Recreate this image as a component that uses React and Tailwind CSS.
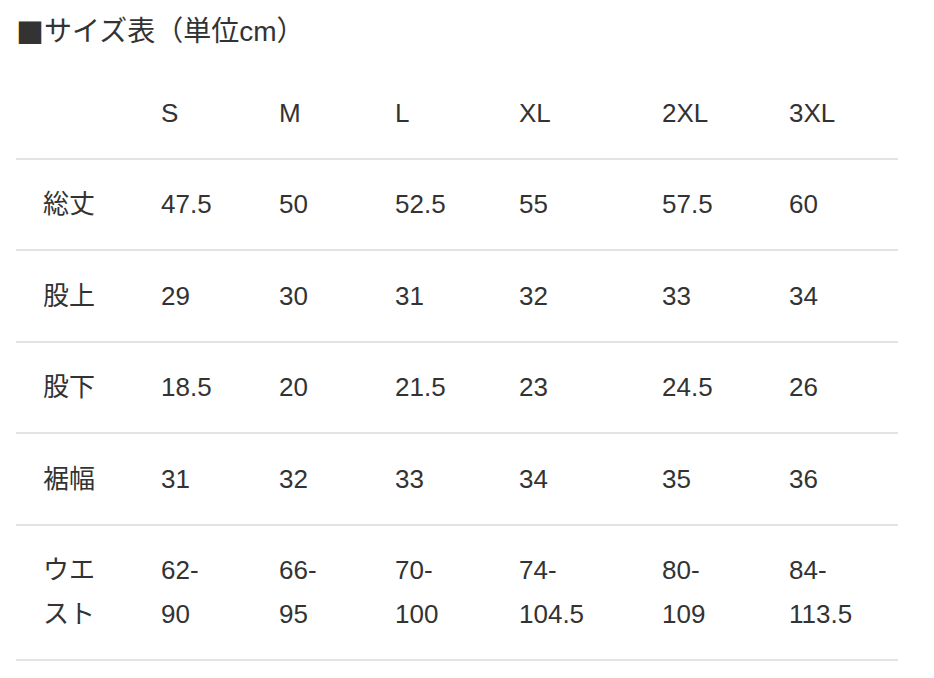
import React from "react";

const sizes = ["S", "M", "L", "XL", "2XL", "3XL"];

const rows = [
  { label: "総丈", values: ["47.5", "50", "52.5", "55", "57.5", "60"] },
  { label: "股上", values: ["29", "30", "31", "32", "33", "34"] },
  { label: "股下", values: ["18.5", "20", "21.5", "23", "24.5", "26"] },
  { label: "裾幅", values: ["31", "32", "33", "34", "35", "36"] },
  { label: "ウエスト", values: ["62-90", "66-95", "70-100", "74-104.5", "80-109", "84-113.5"] },
];

const widths = ["w-[118px]", "w-[118px]", "w-[116px]", "w-[124px]", "w-[143px]", "w-[127px]", "w-[136px]"];

function Cell({ children, className = "" }) {
  return <td className={"px-[27px] py-[22.75px] align-top " + className}>{children}</td>;
}

export default function App() {
  return (
    <div
      className="bg-white min-h-[678px] pl-4 pt-[10px] text-[#333] text-[26px] leading-[44px]"
      style={{ fontFamily: '"Liberation Sans", "Noto Sans CJK JP", sans-serif' }}
    >
      <h2 className="font-normal text-[28px] h-[44px] mb-[14px] flex items-center">
        <span style={{ fontFamily: '"Noto Sans CJK JP", sans-serif' }}>■</span>
        <span>サイズ表（単位cm）</span>
      </h2>
      <table className="w-[882px] table-fixed border-collapse">
        <colgroup>
          {widths.map((w, i) => (
            <col key={i} className={w} />
          ))}
        </colgroup>
        <thead>
          <tr className="border-b-2 border-[#e3e3e3]">
            <Cell />
            {sizes.map((s) => (
              <Cell key={s}>{s}</Cell>
            ))}
          </tr>
        </thead>
        <tbody>
          {rows.map((r) => (
            <tr key={r.label} className="border-b-2 border-[#e3e3e3]">
              <Cell className="break-all">{r.label}</Cell>
              {r.values.map((v, i) => (
                <Cell key={i}>
                  {v.includes("-") ? (
                    <>
                      {v.split("-")[0]}-
                      <br />
                      {v.split("-")[1]}
                    </>
                  ) : (
                    v
                  )}
                </Cell>
              ))}
            </tr>
          ))}
        </tbody>
      </table>
    </div>
  );
}
